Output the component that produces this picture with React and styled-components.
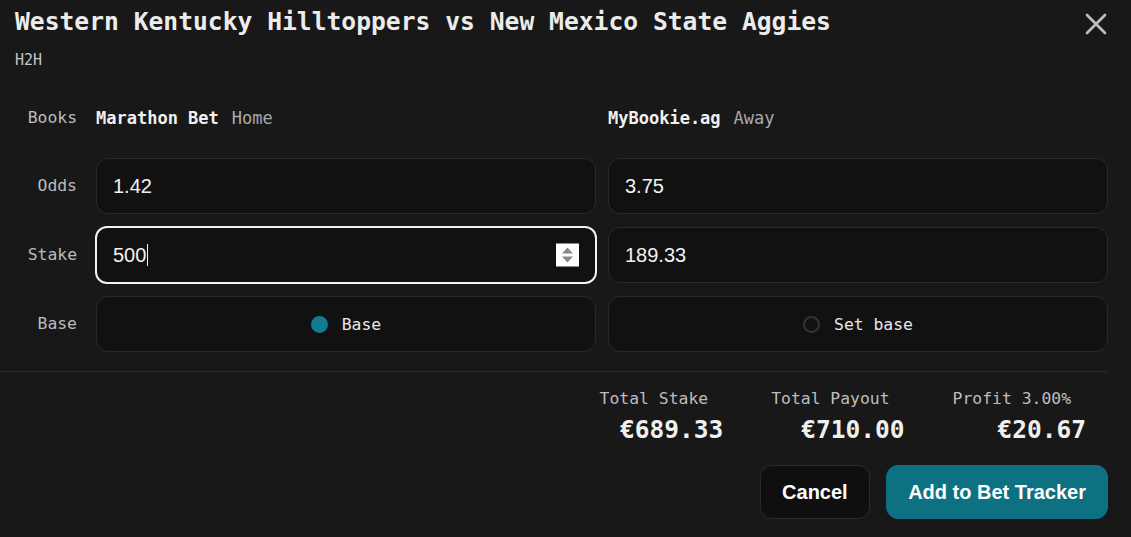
import React from "react";
import styled, { createGlobalStyle } from "styled-components";

const Global = createGlobalStyle`
  html, body { margin: 0; padding: 0; background: #181818; }
  body { font-family: "DejaVu Sans Mono", monospace; color: #e6e6e6; }
  * { box-sizing: border-box; }
`;

const Dialog = styled.div`
  width: 1131px;
  height: 537px;
  background: #181818;
  padding: 7px 23px 0 15px;
  overflow: hidden;
`;

const Header = styled.div`
  display: flex;
  justify-content: space-between;
  align-items: flex-start;
`;

const Title = styled.h2`
  margin: 0;
  font-family: "DejaVu Sans Mono", monospace;
  font-weight: 700;
  font-size: 24.65px;
  line-height: 30px;
  color: #ececec;
  letter-spacing: 0;
`;

const Close = styled.button`
  all: unset;
  width: 24px;
  height: 24px;
  margin-top: 5px;
  display: flex;
  align-items: center;
  justify-content: center;
  color: #bdbdbd;
`;

const Market = styled.div`
  margin-top: 13px;
  font-size: 15px;
  line-height: 20px;
  color: #c4c4c4;
`;

const Grid = styled.div`
  margin-top: 30px;
  display: grid;
  grid-template-columns: 69px 1fr 1fr;
  grid-template-rows: 45px 56px 56px 56px;
  column-gap: 12px;
  row-gap: 13px;
`;

const RowLabel = styled.div`
  font-size: 16.4px;
  line-height: 34px;
  color: #bcbcbc;
  text-align: right;
  padding-right: 7px;
  align-self: ${(p) => (p.$top ? "start" : "center")};
  ${(p) => p.$top && "margin-top: 1px;"}
`;

const BookCell = styled.div`
  align-self: start;
  margin-top: 1px;
  font-size: 17px;
  line-height: 34px;
  display: flex;
  gap: 13px;
`;

const BookName = styled.span`
  font-weight: 700;
  color: #f0f0f0;
`;

const Side = styled.span`
  color: #a9a9a9;
`;

const Field = styled.div`
  position: relative;
  display: flex;
  align-items: center;
  height: 56px;
  padding: 0 16px;
  background: #111111;
  border: ${(p) => (p.$focused ? "2px solid #f2f2f2" : "1px solid #2a2a2a")};
  border-radius: 12px;
  font-family: "Liberation Sans", Arial, sans-serif;
  font-size: 20px;
  color: #f2f2f2;
  ${(p) => p.$focused && "margin: -1px -1px; height: 58px; padding-left: 16px;"}
`;

const Caret = styled.span`
  display: inline-block;
  width: 1px;
  height: 22px;
  background: #f2f2f2;
  margin-left: 1px;
`;

const Spinner = styled.div`
  position: absolute;
  right: 16px;
  top: 50%;
  transform: translateY(-50%);
  width: 23px;
  height: 23px;
  background: #ffffff;
  display: flex;
  align-items: center;
  justify-content: center;
`;

const Toggle = styled.div`
  display: flex;
  align-items: center;
  justify-content: center;
  gap: 14px;
  height: 56px;
  background: #111111;
  border: 1px solid #2a2a2a;
  border-radius: 12px;
  font-size: 16.4px;
  color: #e8e8e8;
`;

const Radio = styled.span`
  width: 17px;
  height: 17px;
  border-radius: 50%;
  ${(p) =>
    p.$checked
      ? "background: #107c91;"
      : "border: 2px solid #333333; background: transparent;"}
`;

const Divider = styled.hr`
  margin: 19px 0 0 -15px;
  border: none;
  border-top: 1px solid #2a2a2a;
  height: 0;
`;

const Totals = styled.div`
  display: flex;
  justify-content: flex-end;
  gap: 48px;
  padding-right: 22px;
  margin-top: 16px;
`;

const Stat = styled.div`
  display: flex;
  flex-direction: column;
  align-items: flex-end;
`;

const StatLabel = styled.div`
  font-size: 16.4px;
  line-height: 22px;
  color: #bdbdbd;
  padding-right: 15px;
`;

const StatValue = styled.div`
  margin-top: 5px;
  font-size: 24.5px;
  line-height: 30px;
  font-weight: 700;
  color: #f0f0f0;
`;

const Actions = styled.div`
  display: flex;
  justify-content: flex-end;
  gap: 16px;
  margin-top: 20px;
`;

const Button = styled.button`
  height: 54px;
  padding: 0 ${(p) => (p.$primary ? "21px" : "21.5px")};
  border-radius: 12px;
  border: 1px solid ${(p) => (p.$primary ? "#0d7182" : "#2a2a2a")};
  background: ${(p) => (p.$primary ? "#0d7182" : "#0f0f0f")};
  color: #ffffff;
  font-family: "Liberation Sans", Arial, sans-serif;
  font-weight: 700;
  font-size: 20px;
  cursor: pointer;
`;

export default function App() {
  return (
    <Dialog>
      <Global />
      <Header>
        <Title>Western Kentucky Hilltoppers vs New Mexico State Aggies</Title>
        <Close aria-label="Close">
          <svg width="24" height="24" viewBox="0 0 24 24">
            <path d="M3 3 L21 21 M21 3 L3 21" stroke="currentColor" strokeWidth="2.8" strokeLinecap="round" />
          </svg>
        </Close>
      </Header>
      <Market>H2H</Market>
      <Grid>
        <RowLabel $top>Books</RowLabel>
        <BookCell>
          <BookName>Marathon Bet</BookName>
          <Side>Home</Side>
        </BookCell>
        <BookCell>
          <BookName>MyBookie.ag</BookName>
          <Side>Away</Side>
        </BookCell>

        <RowLabel>Odds</RowLabel>
        <Field>1.42</Field>
        <Field>3.75</Field>

        <RowLabel>Stake</RowLabel>
        <Field $focused>
          500<Caret />
          <Spinner>
            <svg width="15" height="17" viewBox="0 0 15 17">
              <path d="M7.5 1 L13 7 L2 7 Z" fill="#8a8a8a" />
              <path d="M7.5 16 L13 10 L2 10 Z" fill="#8a8a8a" />
            </svg>
          </Spinner>
        </Field>
        <Field>189.33</Field>

        <RowLabel>Base</RowLabel>
        <Toggle>
          <Radio $checked />
          Base
        </Toggle>
        <Toggle>
          <Radio />
          Set base
        </Toggle>
      </Grid>
      <Divider />
      <Totals>
        <Stat>
          <StatLabel>Total Stake</StatLabel>
          <StatValue>€689.33</StatValue>
        </Stat>
        <Stat>
          <StatLabel>Total Payout</StatLabel>
          <StatValue>€710.00</StatValue>
        </Stat>
        <Stat>
          <StatLabel>Profit 3.00%</StatLabel>
          <StatValue>€20.67</StatValue>
        </Stat>
      </Totals>
      <Actions>
        <Button>Cancel</Button>
        <Button $primary>Add to Bet Tracker</Button>
      </Actions>
    </Dialog>
  );
}
